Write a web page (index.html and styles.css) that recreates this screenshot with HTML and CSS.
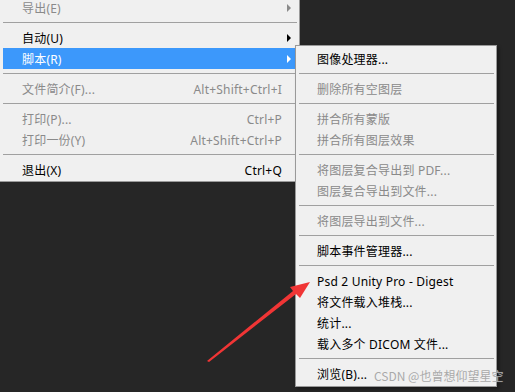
FILE: index.html
```html
<!DOCTYPE html>
<html lang="zh-CN">
<head>
  <meta charset="UTF-8">
  <title>脚本菜单</title>
  <link rel="stylesheet" href="styles.css">
</head>
<body>
  <div class="screen">
    <div class="menu main">
      <div class="item off"><span class="label">导出(E)</span><span class="key"></span><span class="arrow"></span></div>
      <div class="sep"></div>
      <div class="item"><span class="label">自动(U)</span><span class="key"></span><span class="arrow"></span></div>
      <div class="item active"><span class="label">脚本(R)</span><span class="key"></span><span class="arrow"></span></div>
      <div class="sep"></div>
      <div class="item off"><span class="label">文件简介(F)...</span><span class="key">Alt+Shift+Ctrl+I</span></div>
      <div class="sep"></div>
      <div class="item off"><span class="label">打印(P)...</span><span class="key">Ctrl+P</span></div>
      <div class="item off"><span class="label">打印一份(Y)</span><span class="key">Alt+Shift+Ctrl+P</span></div>
      <div class="sep"></div>
      <div class="item"><span class="label">退出(X)</span><span class="key">Ctrl+Q</span></div>
    </div>

    <div class="menu sub">
      <div class="item">图像处理器...</div>
      <div class="sep"></div>
      <div class="item off">删除所有空图层</div>
      <div class="sep"></div>
      <div class="item off">拼合所有蒙版</div>
      <div class="item off">拼合所有图层效果</div>
      <div class="sep"></div>
      <div class="item off">将图层复合导出到 PDF...</div>
      <div class="item off">图层复合导出到文件...</div>
      <div class="sep"></div>
      <div class="item off">将图层导出到文件...</div>
      <div class="sep"></div>
      <div class="item">脚本事件管理器...</div>
      <div class="sep"></div>
      <div class="item">Psd 2 Unity Pro - Digest</div>
      <div class="item">将文件载入堆栈...</div>
      <div class="item">统计...</div>
      <div class="item">载入多个 DICOM 文件...</div>
      <div class="sep"></div>
      <div class="item">浏览(B)...</div>
    </div>

    <!-- 注释用の赤い矢印 -->
    <svg class="pointer" width="515" height="392" viewBox="0 0 515 392">
      <polygon points="207,361 293,291 290,287 310,282 300,298 296,294 209,362" fill="#f03535"/>
    </svg>

    <div class="watermark">CSDN @也曾想仰望星空</div>
  </div>
</body>
</html>
```

FILE: styles.css
```css
body {
  margin: 0;
  background: #262626;
  font-family: "Noto Sans", "Noto Sans CJK SC", sans-serif;
  font-size: 12px;
}
.screen {
  position: relative;
  width: 515px;
  height: 392px;
  overflow: hidden;
  display: flex;
  align-items: flex-start;
}
.menu {
  background: #f0f0f0;
  box-sizing: border-box;
  color: #000;
}
.main {
  width: 300px;
  margin-top: -3px;
  padding: 0 2px 1px 3px;
  border-right: 1px solid #9a9a9a;
  border-bottom: 1px solid #9a9a9a;
}
.sub {
  position: relative;
  width: 202px;
  margin-left: -5px;
  margin-top: 45px;
  padding: 2px 2px 2px 3px;
  border: 1px solid #999;
  box-shadow: 2px 2px 3px rgba(0, 0, 0, 0.35);
}
.item {
  height: 19px;
  padding-top: 2px;
  line-height: 19px;
  letter-spacing: 0.2px;
  white-space: nowrap;
}
.main .item {
  display: grid;
  grid-template-columns: 1fr auto 15px;
  padding-left: 19px;
}
.sub .item {
  padding-left: 18px;
}
.off {
  color: #8a8a8a;
}
.active {
  background: #3c98fb;
  color: #fff;
}
.arrow {
  grid-column: 3;
  align-self: center;
  justify-self: start;
  margin-left: 5px;
  margin-top: -2px;
  width: 0;
  height: 0;
  border-left: 4px solid currentColor;
  border-top: 4px solid transparent;
  border-bottom: 4px solid transparent;
}
.sep {
  height: 1px;
  margin: 4px 0;
  background: #a0a0a0;
}
.pointer {
  position: absolute;
  left: 0;
  top: 0;
  pointer-events: none;
}
.watermark {
  position: absolute;
  left: 374px;
  top: 366px;
  font-family: "Noto Sans CJK SC", sans-serif;
  font-size: 12px;
  line-height: 20px;
  color: #a9a9a9;
  text-shadow: 0 0 1px rgba(255, 255, 255, 0.4);
  white-space: nowrap;
}
```
